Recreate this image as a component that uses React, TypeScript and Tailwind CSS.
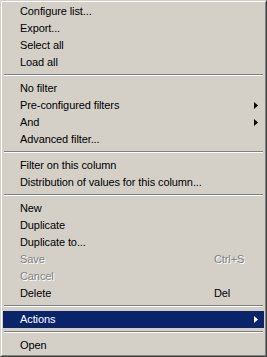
import React from "react";

type Item =
  | { kind: "sep" }
  | {
      kind: "item";
      label: string;
      shortcut?: string;
      submenu?: boolean;
      disabled?: boolean;
      active?: boolean;
    };

const items: Item[] = [
  { kind: "item", label: "Configure list..." },
  { kind: "item", label: "Export..." },
  { kind: "item", label: "Select all" },
  { kind: "item", label: "Load all" },
  { kind: "sep" },
  { kind: "item", label: "No filter" },
  { kind: "item", label: "Pre-configured filters", submenu: true },
  { kind: "item", label: "And", submenu: true },
  { kind: "item", label: "Advanced filter..." },
  { kind: "sep" },
  { kind: "item", label: "Filter on this column" },
  { kind: "item", label: "Distribution of values for this column..." },
  { kind: "sep" },
  { kind: "item", label: "New" },
  { kind: "item", label: "Duplicate" },
  { kind: "item", label: "Duplicate to..." },
  { kind: "item", label: "Save", shortcut: "Ctrl+S", disabled: true },
  { kind: "item", label: "Cancel", disabled: true },
  { kind: "item", label: "Delete", shortcut: "Del" },
  { kind: "sep" },
  { kind: "item", label: "Actions", submenu: true, active: true },
  { kind: "sep" },
  { kind: "item", label: "Open" },
];

function Arrow({ white }: { white?: boolean }) {
  return (
    <svg width="4" height="7" viewBox="0 0 4 7" className="block">
      <path d="M0 0L4 3.5L0 7Z" fill={white ? "#ffffff" : "#000000"} />
    </svg>
  );
}

export default function App() {
  return (
    <div className="w-[267px] h-[357px] bg-[#d4d0c8] border-t border-l border-[#d4d0c8] border-r border-b border-r-[#404040] border-b-[#404040]">
      <div className="h-full border-t border-l border-white border-r border-b border-r-[#808080] border-b-[#808080] p-px">
        <ul
          className="text-[11px] leading-[17px] tracking-[-0.1px] text-black"
          style={{ fontFamily: "Tahoma, 'Liberation Sans', Arial, sans-serif" }}
        >
          {items.map((it, i) =>
            it.kind === "sep" ? (
              <li key={i} className="h-[9px] pt-[3px] px-px">
                <div className="h-px bg-[#808080]" />
                <div className="h-px bg-white" />
              </li>
            ) : (
              <li
                key={i}
                className={
                  "h-[17px] flex items-center pl-[17px] pr-[6px] " +
                  (it.active ? "bg-[#0a246a] text-white" : "")
                }
              >
                <span
                  className={
                    "w-[194px] whitespace-nowrap " +
                    (it.disabled ? "text-[#808080] [text-shadow:1px_1px_0_#ffffff]" : "")
                  }
                >
                  {it.label}
                </span>
                <span
                  className={
                    "flex-1 whitespace-nowrap " +
                    (it.disabled ? "text-[#808080] [text-shadow:1px_1px_0_#ffffff]" : "")
                  }
                >
                  {it.shortcut}
                </span>
                {it.submenu && <Arrow white={it.active} />}
              </li>
            )
          )}
        </ul>
      </div>
    </div>
  );
}
